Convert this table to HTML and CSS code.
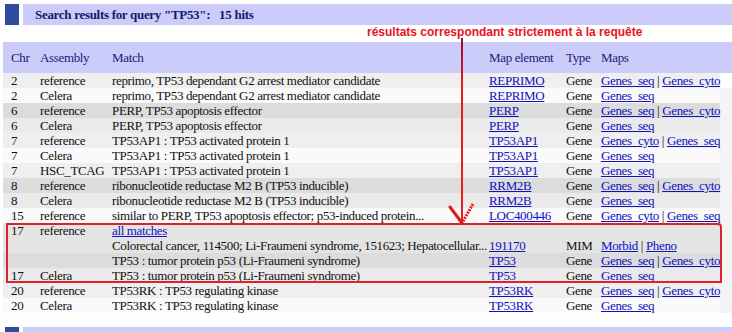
FILE: index.html
```html
<!DOCTYPE html>
<html>
<head>
<meta charset="utf-8">
<link rel="stylesheet" href="styles.css">
</head>
<body>
<div class="page">
  <div class="titlebar">
    <div class="square"></div>
    <div class="bar"><span class="title">Search results for query "TP53":&nbsp;&nbsp; 15 hits</span></div>
  </div>
  <div class="note">résultats correspondant strictement à la requête</div>
  <table class="results">
    <colgroup>
      <col class="c-chr"><col class="c-asm"><col class="c-match"><col class="c-map"><col class="c-type"><col class="c-maps"><col class="c-edge">
    </colgroup>
    <thead>
      <tr><th class="chr">Chr</th><th>Assembly</th><th>Match</th><th>Map element</th><th>Type</th><th>Maps</th><th></th></tr>
    </thead>
    <tbody>
      <tr class="a1"><td class="chr">2</td><td>reference</td><td>reprimo, TP53 dependant G2 arrest mediator candidate</td><td><a href="#">REPRIMO</a></td><td>Gene</td><td><a href="#">Genes_seq</a> | <a href="#">Genes_cyto</a></td><td class="edge first"></td></tr>
      <tr class="a2"><td class="chr">2</td><td>Celera</td><td>reprimo, TP53 dependant G2 arrest mediator candidate</td><td><a href="#">REPRIMO</a></td><td>Gene</td><td><a href="#">Genes_seq</a></td><td class="edge"></td></tr>
      <tr class="b1"><td class="chr">6</td><td>reference</td><td>PERP, TP53 apoptosis effector</td><td><a href="#">PERP</a></td><td>Gene</td><td><a href="#">Genes_seq</a> | <a href="#">Genes_cyto</a></td><td class="edge"></td></tr>
      <tr class="b2"><td class="chr">6</td><td>Celera</td><td>PERP, TP53 apoptosis effector</td><td><a href="#">PERP</a></td><td>Gene</td><td><a href="#">Genes_seq</a></td><td class="edge"></td></tr>
      <tr class="a1"><td class="chr">7</td><td>reference</td><td>TP53AP1 : TP53 activated protein 1</td><td><a href="#">TP53AP1</a></td><td>Gene</td><td><a href="#">Genes_cyto</a> | <a href="#">Genes_seq</a></td><td class="edge"></td></tr>
      <tr class="a2"><td class="chr">7</td><td>Celera</td><td>TP53AP1 : TP53 activated protein 1</td><td><a href="#">TP53AP1</a></td><td>Gene</td><td><a href="#">Genes_seq</a></td><td class="edge"></td></tr>
      <tr class="a1"><td class="chr">7</td><td>HSC_TCAG</td><td>TP53AP1 : TP53 activated protein 1</td><td><a href="#">TP53AP1</a></td><td>Gene</td><td><a href="#">Genes_seq</a></td><td class="edge"></td></tr>
      <tr class="b1"><td class="chr">8</td><td>reference</td><td>ribonucleotide reductase M2 B (TP53 inducible)</td><td><a href="#">RRM2B</a></td><td>Gene</td><td><a href="#">Genes_seq</a> | <a href="#">Genes_cyto</a></td><td class="edge"></td></tr>
      <tr class="b2"><td class="chr">8</td><td>Celera</td><td>ribonucleotide reductase M2 B (TP53 inducible)</td><td><a href="#">RRM2B</a></td><td>Gene</td><td><a href="#">Genes_seq</a></td><td class="edge"></td></tr>
      <tr class="a2"><td class="chr">15</td><td>reference</td><td>similar to PERP, TP53 apoptosis effector; p53-induced protein...</td><td><a href="#">LOC400446</a></td><td>Gene</td><td><a href="#">Genes_cyto</a> | <a href="#">Genes_seq</a></td><td class="edge"></td></tr>
      <tr class="c1"><td class="chr">17</td><td>reference</td><td><a href="#">all matches</a></td><td></td><td></td><td></td><td class="edge"></td></tr>
      <tr class="c1"><td class="chr"></td><td></td><td>Colorectal cancer, 114500; Li-Fraumeni syndrome, 151623; Hepatocellular...</td><td><a href="#">191170</a></td><td>MIM</td><td><a href="#">Morbid</a> | <a href="#">Pheno</a></td><td class="edge"></td></tr>
      <tr class="b1"><td class="chr"></td><td></td><td>TP53 : tumor protein p53 (Li-Fraumeni syndrome)</td><td><a href="#">TP53</a></td><td>Gene</td><td><a href="#">Genes_seq</a> | <a href="#">Genes_cyto</a></td><td class="edge"></td></tr>
      <tr class="b2"><td class="chr">17</td><td>Celera</td><td>TP53 : tumor protein p53 (Li-Fraumeni syndrome)</td><td><a href="#">TP53</a></td><td>Gene</td><td><a href="#">Genes_seq</a></td><td class="edge"></td></tr>
      <tr class="a1"><td class="chr">20</td><td>reference</td><td>TP53RK : TP53 regulating kinase</td><td><a href="#">TP53RK</a></td><td>Gene</td><td><a href="#">Genes_seq</a> | <a href="#">Genes_cyto</a></td><td class="edge"></td></tr>
      <tr class="a2"><td class="chr">20</td><td>Celera</td><td>TP53RK : TP53 regulating kinase</td><td><a href="#">TP53RK</a></td><td>Gene</td><td><a href="#">Genes_seq</a></td><td class="edge"></td></tr>
    </tbody>
  </table>
  <div class="titlebar bottom">
    <div class="square"></div>
    <div class="bar"></div>
  </div>

  <div class="highlight"></div>
  <svg class="arrow" width="40" height="190" viewBox="0 0 40 190">
    <defs>
      <linearGradient id="shaft" gradientUnits="userSpaceOnUse" x1="0" y1="0" x2="0" y2="184">
        <stop offset="0" stop-color="#8c1036"/>
        <stop offset="0.12" stop-color="#b8122e"/>
        <stop offset="0.25" stop-color="#e61c1c"/>
        <stop offset="1" stop-color="#ee1c1c"/>
      </linearGradient>
    </defs>
    <rect x="20" y="0" width="2" height="185" fill="url(#shaft)"/>
    <path d="M9 169 L21 185" stroke="#e01818" stroke-width="3" stroke-linecap="round" fill="none"/>
    <path d="M32 166 L21 185" stroke="#e81c1c" stroke-width="3" stroke-dasharray="2 1" fill="none"/>
  </svg>
</div>
</body>
</html>
```
FILE: styles.css
```css
html, body {
  margin: 0;
  padding: 0;
  background: #ffffff;
}
.page {
  position: relative;
  width: 732px;
  height: 332px;
  overflow: hidden;
  font-family: "Liberation Serif", "Times New Roman", serif;
  font-size: 13px;
  letter-spacing: -0.35px;
  color: #111111;
}
.titlebar {
  display: flex;
  gap: 4px;
  padding: 4px 0 0 5px;
  height: 21px;
}
.square {
  width: 14px;
  height: 21px;
  background: #2f4c9c;
}
.bar {
  flex: 1;
  background: #ccccfa;
  display: flex;
  align-items: center;
}
.title {
  margin-left: 12px;
  font-weight: bold;
  font-size: 13px;
  letter-spacing: -0.3px;
  color: #15186a;
  padding-top: 1px;
}
.note {
  height: 17px;
  padding-left: 367px;
  font-family: "Liberation Sans", Arial, sans-serif;
  font-weight: bold;
  font-size: 12px;
  letter-spacing: 0;
  line-height: 15px;
  color: #e8131c;
}
.results {
  margin-left: 3px;
  border-collapse: collapse;
  table-layout: fixed;
  width: 729px;
}
.c-chr { width: 34px; }
.c-asm { width: 72px; }
.c-match { width: 377px; }
.c-map { width: 77px; }
.c-type { width: 35px; }
.c-maps { width: 122px; }
.c-edge { width: 12px; }
.results th {
  background: #ccccfa;
  color: #1a1a7a;
  font-weight: normal;
  text-align: left;
  height: 31px;
  padding: 0 0 0 3px;
  white-space: nowrap;
}
.results td {
  height: 15px;
  line-height: 15px;
  padding: 0 0 0 3px;
  white-space: nowrap;
  overflow: visible;
}
.results th.chr, .results td.chr { padding-left: 8px; }
.results a { color: #1010c0; }
.a1 td { background: #efefef; }
.a2 td { background: #fafafa; }
.b1 td { background: #dcdcdc; }
.b2 td { background: #eaeaea; }
.c1 td { background: #e4e4e4; }
.results td.edge { background: #f4f4f4; }
.results td.edge.first { background: #ffffff; }
.bottom {
  padding-top: 14px;
}
.highlight {
  position: absolute;
  left: 6px;
  top: 223px;
  width: 712px;
  height: 56px;
  border: 2px solid #e0202c;
  border-top-right-radius: 4px;
}
.arrow {
  position: absolute;
  left: 441px;
  top: 38px;
}
```
